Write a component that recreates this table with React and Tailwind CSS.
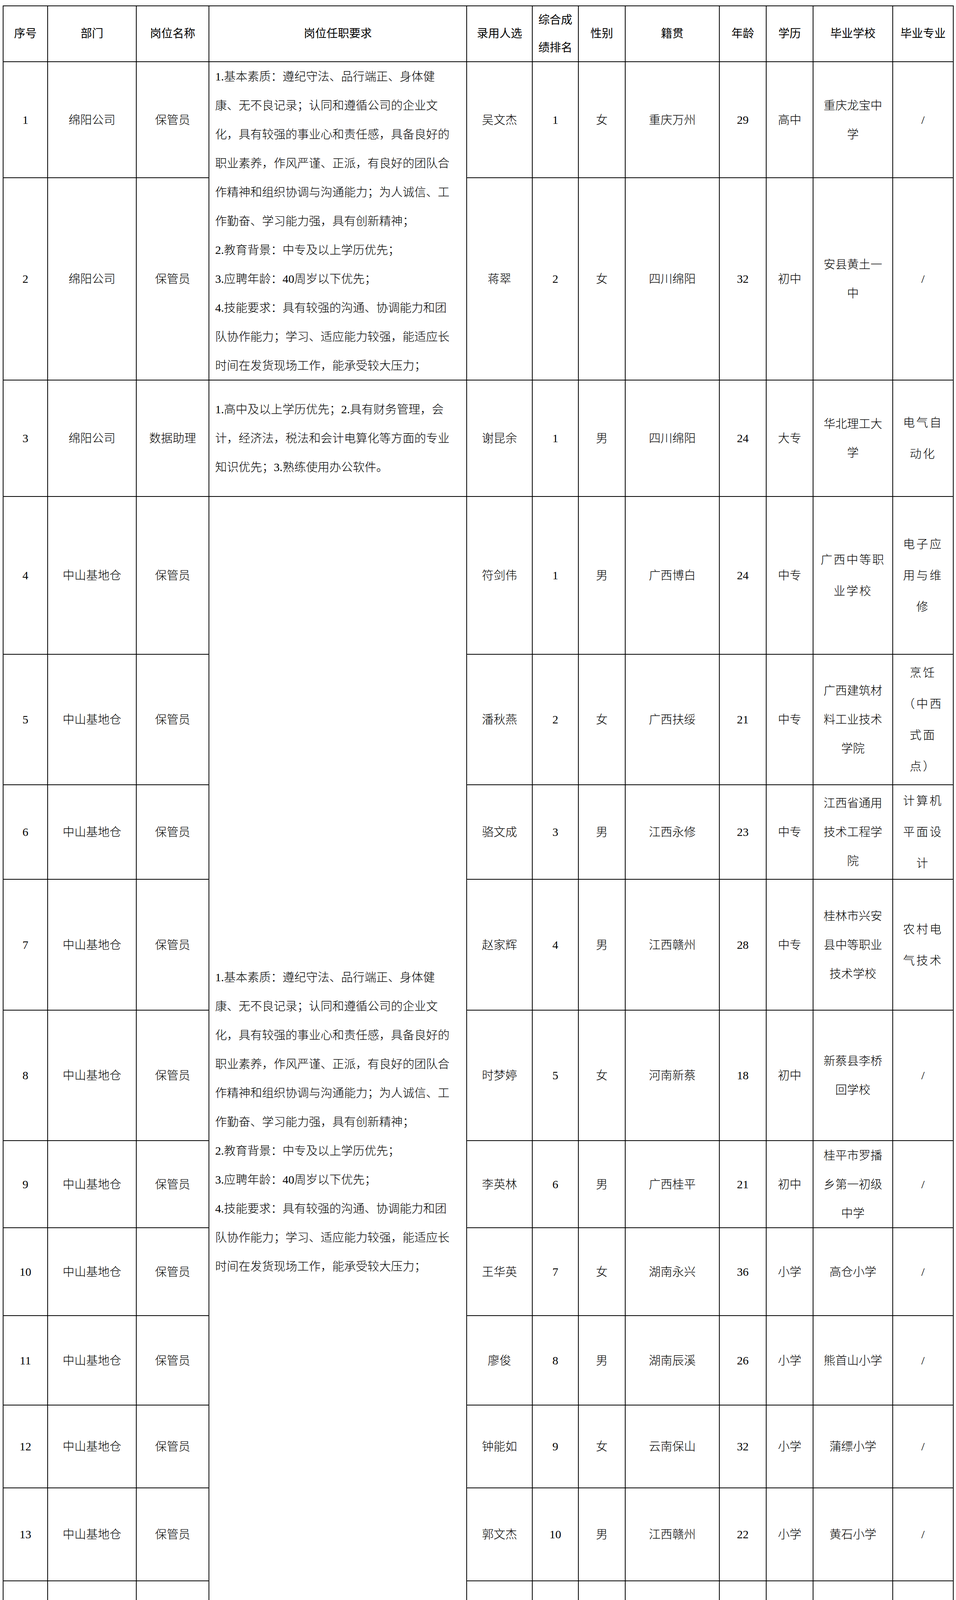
import React from 'react';

const A = [
  '1.基本素质：遵纪守法、品行端正、身体健',
  '康、无不良记录；认同和遵循公司的企业文',
  '化，具有较强的事业心和责任感，具备良好的',
  '职业素养，作风严谨、正派，有良好的团队合',
  '作精神和组织协调与沟通能力；为人诚信、工',
  '作勤奋、学习能力强，具有创新精神；',
  '2.教育背景：中专及以上学历优先；',
  '3.应聘年龄：40周岁以下优先；',
  '4.技能要求：具有较强的沟通、协调能力和团',
  '队协作能力；学习、适应能力较强，能适应长',
  '时间在发货现场工作，能承受较大压力；',
];
const B1 = [
  '1.高中及以上学历优先；2.具有财务管理，会',
  '计，经济法，税法和会计电算化等方面的专业',
  '知识优先；3.熟练使用办公软件。',
];
const B2 = [
  '1.高中及以上学历优先；2.具有财务管理、会',
  '计、经济法、税法和会计电算化等方面的专业',
  '知识优先；3.熟练使用办公软件。',
];
const C = [
  '1.高中及以上学历；',
  '2.严格遵守公司各项规章制度及相关工作流',
  '程。配合并完成主管交付的日常物流管理工',
  '作。3.责任心较强，工作中积极主动，乐于奉',
  '献。',
  '4.有较好的沟通协调能力。5.熟悉电脑及各类',
  '办公软件的使用。',
];

const SPAN = { 1: '', 2: 'row-span-2', 12: 'row-span-12' };

const rows = [
  { dept: ['绵阳公司'], post: '保管员', req: { span: 2, lines: A }, name: '吴文杰', rank: '1', sex: '女', origin: '重庆万州', age: '29', edu: '高中', school: ['重庆龙宝中', '学'], major: ['/'] },
  { dept: ['绵阳公司'], post: '保管员', name: '蒋翠', rank: '2', sex: '女', origin: '四川绵阳', age: '32', edu: '初中', school: ['安县黄土一', '中'], major: ['/'] },
  { dept: ['绵阳公司'], post: '数据助理', req: { span: 1, lines: B1 }, name: '谢昆余', rank: '1', sex: '男', origin: '四川绵阳', age: '24', edu: '大专', school: ['华北理工大', '学'], major: ['电气自', '动化'] },
  { dept: ['中山基地仓'], post: '保管员', req: { span: 12, lines: A }, name: '符剑伟', rank: '1', sex: '男', origin: '广西博白', age: '24', edu: '中专', school: ['广西中等职', '业学校'], schoolSp: true, major: ['电子应', '用与维', '修'] },
  { dept: ['中山基地仓'], post: '保管员', name: '潘秋燕', rank: '2', sex: '女', origin: '广西扶绥', age: '21', edu: '中专', school: ['广西建筑材', '料工业技术', '学院'], major: ['烹饪', '（中西', '式面', '点）'] },
  { dept: ['中山基地仓'], post: '保管员', name: '骆文成', rank: '3', sex: '男', origin: '江西永修', age: '23', edu: '中专', school: ['江西省通用', '技术工程学', '院'], major: ['计算机', '平面设', '计'] },
  { dept: ['中山基地仓'], post: '保管员', name: '赵家辉', rank: '4', sex: '男', origin: '江西赣州', age: '28', edu: '中专', school: ['桂林市兴安', '县中等职业', '技术学校'], major: ['农村电', '气技术'] },
  { dept: ['中山基地仓'], post: '保管员', name: '时梦婷', rank: '5', sex: '女', origin: '河南新蔡', age: '18', edu: '初中', school: ['新蔡县李桥', '回学校'], major: ['/'] },
  { dept: ['中山基地仓'], post: '保管员', name: '李英林', rank: '6', sex: '男', origin: '广西桂平', age: '21', edu: '初中', school: ['桂平市罗播', '乡第一初级', '中学'], major: ['/'] },
  { dept: ['中山基地仓'], post: '保管员', name: '王华英', rank: '7', sex: '女', origin: '湖南永兴', age: '36', edu: '小学', school: ['高仓小学'], major: ['/'] },
  { dept: ['中山基地仓'], post: '保管员', name: '廖俊', rank: '8', sex: '男', origin: '湖南辰溪', age: '26', edu: '小学', school: ['熊首山小学'], major: ['/'] },
  { dept: ['中山基地仓'], post: '保管员', name: '钟能如', rank: '9', sex: '女', origin: '云南保山', age: '32', edu: '小学', school: ['蒲缥小学'], major: ['/'] },
  { dept: ['中山基地仓'], post: '保管员', name: '郭文杰', rank: '10', sex: '男', origin: '江西赣州', age: '22', edu: '小学', school: ['黄石小学'], major: ['/'] },
  { dept: ['中山基地仓'], post: '保管员', name: '过武翔', rank: '11', sex: '男', origin: '江西赣州', age: '23', edu: '小学', school: ['黄石小学'], major: ['/'] },
  { dept: ['中山基地仓'], post: '保管员', name: '陈婷婷', rank: '12', sex: '女', origin: '四川江安', age: '19', edu: '小学', school: ['中坝小学'], major: ['/'] },
  { dept: ['中山基地仓'], post: '单证助理', req: { span: 1, lines: B2 }, name: '陆艳妮', rank: '1', sex: '女', origin: '广西贵港', age: '23', edu: '大专', school: ['广西卫生职', '业技术学院'], schoolSp: true, major: ['卫生信', '息管理', '（大健', '康大数', '据方', '向）'], sp: true, left: true },
  { dept: ['华南经营管', '理中心'], post: '现场监装', req: { span: 1, lines: C }, name: '徐锦辉', rank: '1', sex: '男', origin: '广东罗定', age: '37', edu: '高中', school: ['罗定市第二', '中学'], schoolSp: true, major: ['/'], sp: true, left: true },
  { dept: ['成都RDC'], post: '保管员', req: { span: 1, lines: A }, name: '吴帅', rank: '1', sex: '男', origin: '四川安岳', age: '23', edu: '本科', school: ['吉利学院'], schoolSp: true, major: ['小学教', '育'], sp: true, left: true },
  { dept: ['合肥分公司'], post: '现场监装', req: { span: 1, lines: C }, name: '范同山', rank: '1', sex: '男', origin: '安徽淮南', age: '30', edu: '高中', school: ['安徽省淮南', '第二十一中', '学'], schoolSp: true, major: ['/'], sp: true, left: true },
  { dept: ['合肥分公司'], post: '保管员', req: { span: 2, lines: A }, name: '李玲玲', rank: '1', sex: '女', origin: '安徽合肥', age: '40', edu: '高中', school: ['合肥市第三', '十二中学'], schoolSp: true, major: ['/'], sp: true, left: true },
  { dept: ['合肥分公司'], post: '保管员', name: '郭丽萍', rank: '2', sex: '女', origin: '湖北麻城', age: '34', edu: '高中', school: ['麻城市第五', '中学'], major: ['/'] },
];

function Cell({ lines, leading = 'leading-[74px]', track = '', align = 'center' }) {
  const arr = Array.isArray(lines) ? lines : [lines];
  return (
    <div
      className={
        'flex flex-col justify-center bg-white text-[30px] font-light ' +
        (align === 'left' ? 'items-start pl-[15px] text-left' : 'items-center text-center')
      }
    >
      {arr.map((l, i) => (
        <div key={i} className={'whitespace-nowrap ' + leading + ' ' + track}>
          {l}
        </div>
      ))}
    </div>
  );
}

function HeadCell({ lines }) {
  const arr = Array.isArray(lines) ? lines : [lines];
  return (
    <div className="flex flex-col items-center justify-center bg-white text-center text-[29px] font-normal">
      {arr.map((l, i) => (
        <div key={i} className="whitespace-nowrap leading-[71px]">
          {l}
        </div>
      ))}
    </div>
  );
}

function ReqCell({ req }) {
  return (
    <div
      className={
        'flex flex-col items-start justify-center bg-white pl-[15px] text-left text-[30px] font-light ' +
        SPAN[req.span]
      }
    >
      {req.lines.map((l, i) => (
        <div key={i} className="whitespace-nowrap leading-[74px]">
          {l}
        </div>
      ))}
    </div>
  );
}

export default function App() {
  const headers = ['序号', '部门', '岗位名称', '岗位任职要求', '录用人选', ['综合成', '绩排名'], '性别', '籍贯', '年龄', '学历', '毕业学校', '毕业专业'];
  return (
    <div className="min-h-[7634px] bg-white pl-[7px] pt-[14px] text-black font-['Liberation_Serif','Noto_Sans_CJK_SC',serif]">
      <div className="grid w-max gap-[2px] bg-black p-[2px] grid-cols-[112px_225px_184px_658px_166px_116px_118px_239px_118px_118px_202px_153px] grid-rows-[141px_295px_516px_296px_402px_332px_240px_333px_332px_221px_223px_227px_210px_236px_198px_223px_484px_516px_814px_517px_517px_293px]">
        {headers.map((h, i) => (
          <HeadCell key={'h' + i} lines={h} />
        ))}
        {rows.map((r, idx) => {
          const tr = r.sp ? 'tracking-[3px]' : '';
          return (
            <React.Fragment key={idx}>
              <Cell lines={String(idx + 1)} />
              <Cell lines={r.dept} leading={r.dept.length > 1 ? 'leading-[80px]' : 'leading-[74px]'} track={tr} />
              <Cell lines={r.post} track={tr} />
              {r.req ? <ReqCell req={r.req} /> : null}
              <Cell lines={r.name} track={tr} />
              <Cell lines={r.rank} />
              <Cell lines={r.sex} />
              <Cell lines={r.origin} align={r.left ? 'left' : 'center'} />
              <Cell lines={r.age} />
              <Cell lines={r.edu} />
              <Cell
                lines={r.school}
                leading={r.schoolSp ? 'leading-[80px]' : 'leading-[74px]'}
                track={r.schoolSp ? 'tracking-[3px]' : ''}
              />
              <Cell lines={r.major} leading="leading-[80px]" track={r.major[0] === '/' ? '' : 'tracking-[4px]'} />
            </React.Fragment>
          );
        })}
      </div>
    </div>
  );
}
